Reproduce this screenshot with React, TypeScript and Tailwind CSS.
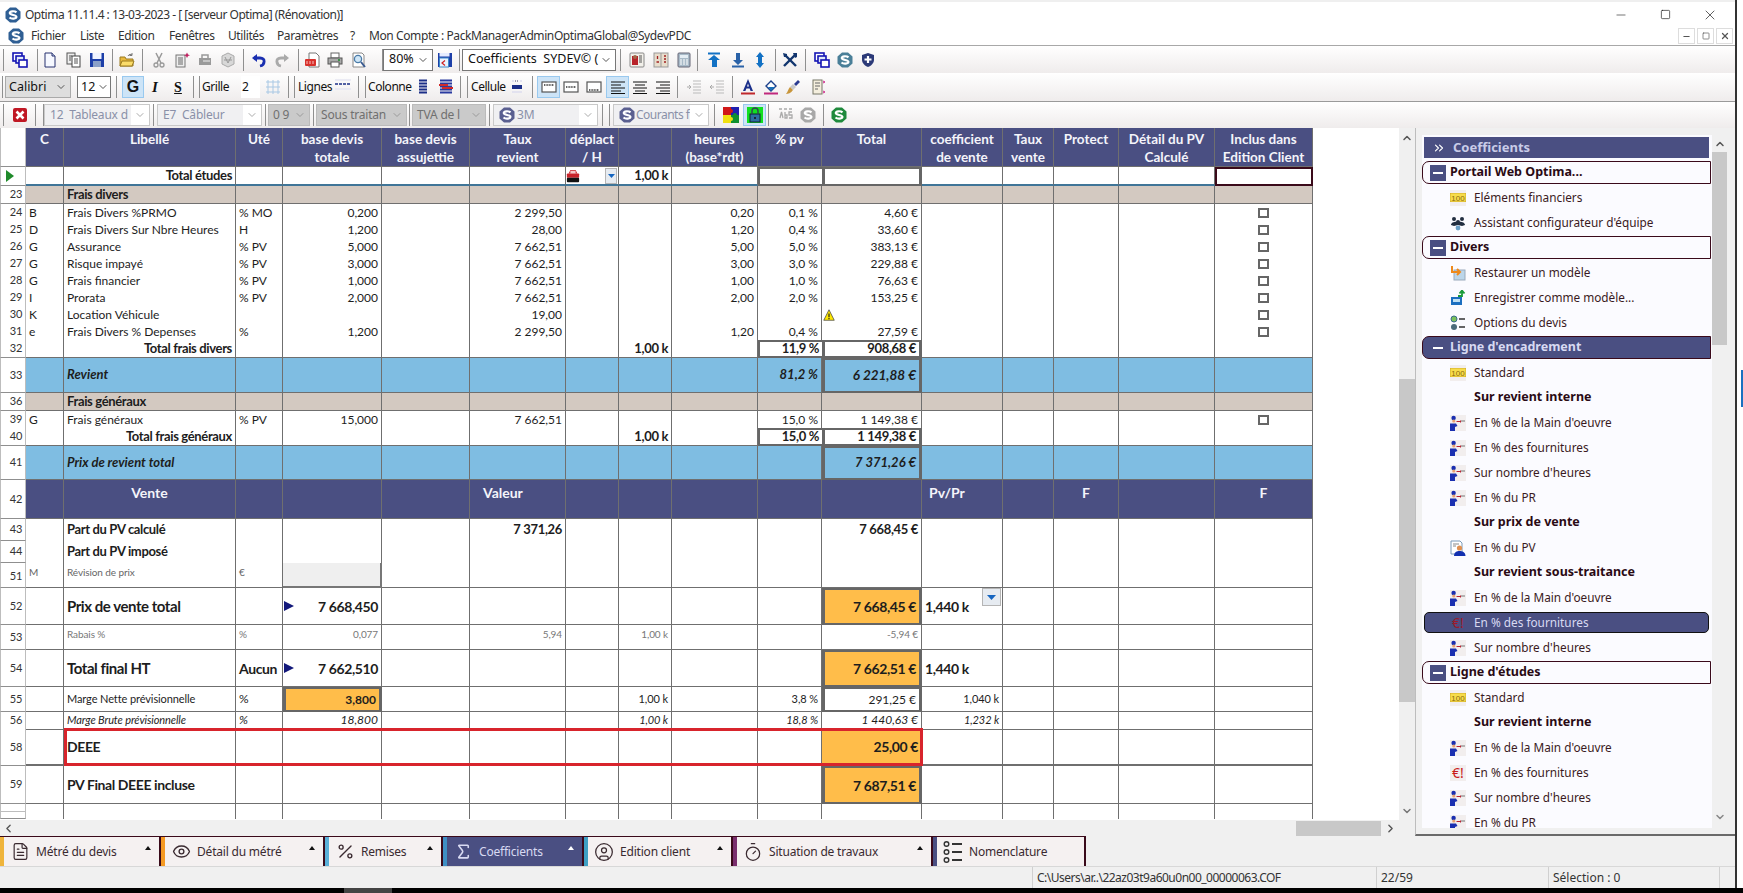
import React, { ReactNode } from "react";
import { FileText, Eye, Percent, Sigma, CircleUser, Timer, ChevronDown, ChevronUp, ChevronLeft, ChevronRight, ChevronsRight, X, Minus, Square } from "lucide-react";

/* ---------- small drawings ---------- */
const I = ({ children, w = 16, h = 16 }: { children: ReactNode; w?: number; h?: number }) => (
  <svg width={w} height={h} viewBox="0 0 16 16" className="shrink-0">{children}</svg>
);
const SLogo = ({ color = "#3f5f8f", size = 16 }: { color?: string; size?: number }) => (
  <I w={size} h={size}>
    <path d="M5 0.5h6l4.5 4v7L11 15.5H5L0.5 11.5v-7z" fill={color} />
    <path d="M11.5 5.4C9.5 3.6 4.8 4 4.8 6.1c0 2.3 6.6 1.5 6.6 3.7 0 2.1-4.8 2.5-6.9.7" stroke="#fff" strokeWidth="2.2" fill="none" />
  </I>
);
const Cascade = () => (
  <I>
    <rect x="1" y="1" width="9" height="8" fill="#fff" stroke="#1414b4" strokeWidth="1.6" />
    <rect x="4" y="4" width="8" height="7" fill="#dfe8f8" stroke="#1414b4" strokeWidth="1.6" />
    <rect x="7" y="8" width="8" height="7" fill="#fff" stroke="#1414b4" strokeWidth="1.6" />
  </I>
);
const NewDoc = () => (
  <I>
    <path d="M3 1h7l3 3v11H3z" fill="#f6f8ff" stroke="#27306e" />
    <path d="M10 1v3h3" fill="#c6cfe8" stroke="#27306e" />
  </I>
);
const CopyDoc = () => (
  <I>
    <rect x="1" y="1" width="8" height="11" fill="#eee" stroke="#555" />
    <rect x="6" y="4" width="8" height="11" fill="#fff" stroke="#444" />
    <path d="M8 7h4M8 9h4M8 11h4M3 4h3M3 6h2M3 8h2" stroke="#555" />
  </I>
);
const Floppy = () => (
  <I>
    <path d="M1 1h14v14H1z" fill="#1d3fa8" />
    <rect x="3.5" y="1" width="9" height="6" fill="#f0f4ff" />
    <rect x="4" y="9" width="8" height="6" fill="#8aa0c8" />
  </I>
);
const FloppyK = () => (
  <I>
    <path d="M1 1h14v14H1z" fill="#1d3fa8" />
    <rect x="2.5" y="1" width="10" height="3.5" fill="#e6ecff" />
    <rect x="2.5" y="6" width="9" height="9" fill="#e9f3ff" stroke="#3d88c8" />
    <path d="M8 8.5l-3 2.5 3 2.5" stroke="#d02020" strokeWidth="1.2" fill="none" />
  </I>
);
const Folder = () => (
  <I>
    <path d="M1 5h5l1 2h7v7H1z" fill="#e9b93d" stroke="#9a7a20" />
    <path d="M3 9h12l-2 5H1z" fill="#fbdc6a" stroke="#9a7a20" />
    <path d="M9 4c1-2 3-2 4-1M13 1v2.5h-2.5" stroke="#777" fill="none" />
  </I>
);
const Scissors = () => (
  <I>
    <path d="M5 1l5 10M11 1L6 11" stroke="#999" strokeWidth="1.5" />
    <circle cx="5" cy="13" r="2" fill="none" stroke="#999" strokeWidth="1.3" />
    <circle cx="11" cy="13" r="2" fill="none" stroke="#999" strokeWidth="1.3" />
  </I>
);
const PasteStar = () => (
  <I>
    <rect x="2" y="3" width="9" height="12" fill="#eee" stroke="#777" />
    <path d="M4 6h5M4 8h5M4 10h5M4 12h5" stroke="#666" />
    <path d="M13 0.5l1 2 2 .8-2 .8-1 2-1-2-2-.8 2-.8z" fill="#c02060" />
  </I>
);
const ToolBox = () => (
  <I>
    <path d="M2 6h12v7H2z" fill="#9a9a9a" />
    <path d="M5 6V3h6v3" fill="none" stroke="#999" strokeWidth="1.5" />
    <path d="M6 9h7" stroke="#eee" />
  </I>
);
const Recycle = () => (
  <I>
    <path d="M8 1l6 3v8l-6 3-6-3V4z" fill="#d8d8d8" stroke="#aaa" />
    <path d="M5 5l3 6 3-6M4 8h8" stroke="#999" fill="none" />
  </I>
);
const Undo = ({ gray = false }: { gray?: boolean }) => (
  <I>
    <path d="M3 6h6c6 0 5 7 0 8" stroke={gray ? "#aaa" : "#1a2fb0"} strokeWidth="2.8" fill="none" />
    <path d="M1 6l5-4v8z" fill={gray ? "#aaa" : "#1a2fb0"} />
  </I>
);
const Pdf = () => (
  <I>
    <path d="M5 1h7l3 3v11H5z" fill="#fff" stroke="#777" />
    <rect x="1" y="7" width="11" height="7" rx="1" fill="#d8312c" />
    <path d="M3 9v3M6 9v3M9 9v3" stroke="#f7c3c0" />
  </I>
);
const Printer = () => (
  <I>
    <rect x="4" y="1" width="8" height="5" fill="#fff" stroke="#666" />
    <rect x="1" y="6" width="14" height="6" fill="#aaa" stroke="#555" />
    <rect x="4" y="10" width="8" height="5" fill="#fff" stroke="#555" />
    <path d="M11 8h2" stroke="#1a8a2a" strokeWidth="1.4" />
  </I>
);
const Preview = () => (
  <I>
    <path d="M2 1h9l2 2v12H2z" fill="#fff" stroke="#888" />
    <circle cx="7" cy="7" r="3.6" fill="#cfe6f7" stroke="#4a7ba8" strokeWidth="1.3" />
    <path d="M10 10l4 5" stroke="#3a5a90" strokeWidth="2" />
  </I>
);
const Book1 = () => (
  <I>
    <rect x="1" y="1" width="14" height="14" rx="1" fill="#f2f0ea" stroke="#888" />
    <rect x="3" y="4" width="6" height="9" fill="#b8232a" />
    <circle cx="6" cy="5" r="2" fill="#a06a4a" />
    <path d="M10 4h3M10 6h3M10 8h3M10 10h3" stroke="#555" />
  </I>
);
const Book2 = () => (
  <I>
    <rect x="1" y="1" width="14" height="14" fill="#e8ddcc" stroke="#999" />
    <path d="M8 1v14" stroke="#999" />
    <path d="M4.5 4v3M3.5 10h2.5M11 4h2M11 7h2M11 10h2" stroke="#a02020" strokeWidth="1.3" />
  </I>
);
const Calc = () => (
  <I>
    <rect x="2" y="1" width="12" height="14" rx="1" fill="#a8bac8" stroke="#667" />
    <rect x="4" y="3" width="8" height="3" fill="#e4edf4" />
    <path d="M4 8h2M7 8h2M10 8h2M4 10h2M7 10h2M10 10h2M4 12h2M7 12h2M10 12h2" stroke="#fff" />
  </I>
);
const Arrow = ({ kind }: { kind: "up" | "down" | "both" }) => (
  <I>
    {kind === "up" && <path d="M2 1.5h12" stroke="#1271c4" strokeWidth="2" />}
    {kind === "up" && <path d="M8 3l6 5h-3v7H6V8H2z" fill="#1271c4" />}
    {kind === "down" && <path d="M2 14.5h12" stroke="#2a62a8" strokeWidth="2" />}
    {kind === "down" && <path d="M8 13l-5-5h3V1h4v7h3z" fill="#2a62a8" />}
    {kind === "both" && <path d="M8 0l4 5H10v6h2l-4 5-4-5h2V5H4z" fill="#1271c4" />}
  </I>
);
const Tools = () => (
  <I>
    <path d="M2 14L13 3" stroke="#12356e" strokeWidth="2.4" />
    <path d="M14 14L4 4" stroke="#12356e" strokeWidth="2.4" />
    <path d="M1 1l4 1 0 3-3 0z" fill="#12356e" />
    <path d="M11 1l4 0v4l-2 1z" fill="#12356e" />
  </I>
);
const Shield = () => (
  <I>
    <path d="M8 1l6 2v5c0 3-3 6-6 7-3-1-6-4-6-7V3z" fill="#2c3a78" />
    <path d="M8 4v7M4.5 7.5h7" stroke="#fff" strokeWidth="2.2" />
  </I>
);
const GridIc = () => (
  <I>
    <path d="M1 3h14M1 8h14M1 13h14M3 1v14M8 1v14M13 1v14" stroke="#a9c8e4" />
  </I>
);
const LinesIc = () => (
  <I>
    <path d="M0 5h16" stroke="#1c2f88" strokeWidth="1.6" strokeDasharray="3 1" />
    <path d="M0 1h16M0 10h16" stroke="#e6e6f2" strokeWidth="1.4" />
  </I>
);
const ColIc = () => (
  <I>
    <path d="M4 1.5h8M4 4.5h8M4 7.5h8M4 10.5h8M4 13.5h8" stroke="#1c2f88" strokeWidth="2" />
  </I>
);
const ColIc2 = () => (
  <I>
    <path d="M2 1.5h12M2 4.5h12M2 7.5h12M2 10.5h12M2 13.5h12" stroke="#2a3ba0" strokeWidth="1.8" />
    <path d="M1 6h9M4 9h11" stroke="#d02a2a" strokeWidth="2" />
  </I>
);
const CellIc = () => (
  <I>
    <rect x="3" y="6" width="10" height="4" fill="#1c2f88" />
    <path d="M3 2h2M11 2h2M3 13h10" stroke="#dde" strokeWidth="1.4" />
    <path d="M6 2h4" stroke="#446" strokeWidth="1" strokeDasharray="1 1" />
  </I>
);
const CellAlign = ({ pos }: { pos: number }) => (
  <I>
    <rect x="1" y="3" width="14" height="10" fill="#fff" stroke="#555" strokeWidth="1.2" />
    <path d={`M3 ${pos}h10`} stroke="#333" strokeWidth="1.4" strokeDasharray="1 .6" />
  </I>
);
const AlignIc = ({ d }: { d: string }) => (
  <I>
    <path d={d} stroke="#111" strokeWidth="1" fill="none" />
  </I>
);
const Indent = ({ flip = false }: { flip?: boolean }) => (
  <I>
    <path d="M7 2h8M7 5h8M7 8h8M7 11h8M7 14h8" stroke="#bbb" />
    <path d={flip ? "M1 8h4M3 6L1 8l2 2" : "M1 8h4M3 6l2 2-2 2"} stroke="#aaa" fill="none" />
  </I>
);
const FontA = () => (
  <I>
    <path d="M8 0L3 12h2.4l1-2.6h3.2l1 2.6H13zM7 7.5L8 4.5 9 7.5z" fill="#1a2f8a" fillRule="evenodd" />
    <path d="M1 14.5h14" stroke="#c0282c" strokeWidth="2" />
  </I>
);
const FillBucket = () => (
  <I>
    <path d="M3 7l5-5 5 5-5 5z" fill="#fff" stroke="#1a3f8a" strokeWidth="1.4" />
    <path d="M5 8h7l-4 4z" fill="#1a6fb8" />
    <path d="M1 14.5h14" stroke="#c0287c" strokeWidth="2" />
  </I>
);
const Brush = () => (
  <I>
    <path d="M9 5l4-4 2 2-4 4z" fill="#2a3a90" />
    <path d="M8 5l3 3-3 3-3-3z" fill="#c8c8c8" />
    <path d="M5 8l3 3c-2 3-5 4-7 4 2-2 2-5 4-7z" fill="#c8953a" />
  </I>
);
const Clip = () => (
  <I>
    <rect x="3" y="1" width="9" height="14" fill="#f4eedd" stroke="#776" />
    <path d="M5 4h5M5 7h5M5 10h3" stroke="#666" />
    <path d="M13 2l2 1-2 1M13 12l2 1-2 1" stroke="#d02a8a" fill="none" />
  </I>
);
const RedX = () => (
  <I>
    <rect x="1" y="1" width="14" height="14" rx="2" fill="#c01824" />
    <path d="M4.5 4.5l7 7M11.5 4.5l-7 7" stroke="#fff" strokeWidth="2.6" />
  </I>
);
const Puzzle = () => (
  <I>
    <rect x="0" y="0" width="8" height="8" fill="#d01818" />
    <rect x="8" y="0" width="8" height="8" fill="#2020b0" />
    <rect x="0" y="8" width="8" height="8" fill="#f0e010" />
    <rect x="8" y="8" width="8" height="8" fill="#109030" />
    <circle cx="8" cy="4" r="2" fill="#d01818" />
    <circle cx="8" cy="12" r="2" fill="#f0e010" />
    <circle cx="12" cy="8" r="2" fill="#109030" />
  </I>
);
const Lock = () => (
  <I>
    <rect x="0" y="0" width="16" height="16" fill="#10e020" />
    <rect x="3" y="7" width="10" height="8" fill="#2c6ea0" stroke="#123" />
    <path d="M5 7V4a3 3 0 016 0v3" fill="none" stroke="#345" strokeWidth="1.4" />
    <circle cx="8" cy="11" r="1" fill="#111" />
  </I>
);
const Abs = () => (
  <I>
    <path d="M1 2h3M6 2h3M11 2h3" stroke="#aaa" strokeWidth="1.6" />
    <path d="M2 11l1.5-6 1.5 6M7 5v6h2V8H7M14 5h-3v3h3v3h-3" stroke="#aaa" strokeWidth="1.3" fill="none" />
  </I>
);
const Hundred = () => (
  <span className="flex h-[16px] w-[16px] shrink-0 items-center bg-[#f2eeee]">
    <svg width="16" height="9" viewBox="0 0 16 9">
      <rect width="16" height="9" fill="#f7dc4a" stroke="#c9a020" strokeWidth="0.8" />
      <text x="8" y="7.5" fontSize="8" textAnchor="middle" fill="#8a6a10" fontFamily="Liberation Sans, sans-serif">100</text>
    </svg>
  </span>
);
const Team = () => (
  <I>
    <circle cx="4" cy="4" r="2" fill="#222e40" />
    <circle cx="12" cy="4" r="2" fill="#222e40" />
    <circle cx="8" cy="7" r="2" fill="#222e40" />
    <path d="M1 10c0-3 5-4 7-3 2-1 7 0 7 3l-3 1-4-1-4 1z" fill="#222e40" />
    <circle cx="8" cy="13" r="2.4" fill="#6aa0c8" />
  </I>
);
const Restore = () => (
  <I>
    <rect x="4" y="5" width="11" height="10" fill="#bcd6ea" stroke="#9ab" />
    <path d="M2 1v6h8M7 4l3 3-3 3" stroke="#ee8a1c" strokeWidth="2" fill="none" />
  </I>
);
const SaveModel = () => (
  <I>
    <rect x="1" y="7" width="11" height="8" fill="#1c6fc0" />
    <rect x="3" y="9" width="7" height="3" fill="#bfe0f4" />
    <path d="M8 6h4V1M9.5 3.5L12 0.5l2.5 3" stroke="#1a9a3a" strokeWidth="1.8" fill="none" />
  </I>
);
const OptionsIc = () => (
  <I>
    <circle cx="4" cy="4" r="3" fill="#7ac05a" stroke="#3a6a8a" />
    <circle cx="4" cy="12" r="3" fill="#4a6a7a" />
    <path d="M9 4h6M9 12h6" stroke="#333" strokeWidth="1.4" />
  </I>
);
const Worker = () => (
  <I>
    <rect x="0" y="0" width="16" height="16" fill="#f2eeee" />
    <circle cx="3.6" cy="3" r="2.2" fill="#1a2fb0" />
    <circle cx="3.8" cy="6" r="1.6" fill="#e8a070" />
    <path d="M0 16V8.5h6L7.5 11 5 12v4z" fill="#1a2fb0" />
    <path d="M6 6h4l1-1v3l-1-1H7z" fill="#b82030" />
    <path d="M11 6h4" stroke="#777" />
  </I>
);
const PvPerson = () => (
  <I>
    <path d="M1 1h9l2 2v11H1z" fill="#fff" stroke="#7a9ab8" />
    <path d="M3 4h6M3 6h3" stroke="#888" />
    <circle cx="9.5" cy="8" r="2.6" fill="#e09050" />
    <path d="M4 16c0-4 3-5 5.5-5s6 1 6 5z" fill="#1230b0" />
  </I>
);
const EuroBang = ({ dim = false }: { dim?: boolean }) => (
  <span className={`flex h-[16px] w-[16px] shrink-0 items-center justify-center text-[14px] leading-none ${dim ? "text-[#9a1a2a]" : "text-[#c91a1a] bg-[#f2eeee]"}`}>€!</span>
);
const Warn = () => (
  <svg width="12" height="12" viewBox="0 0 16 16" className="shrink-0">
    <path d="M8 1l7 14H1z" fill="#ffe800" stroke="#444" strokeWidth="1" />
    <path d="M8 6v5" stroke="#222" strokeWidth="1.6" />
    <path d="M8 12v1.5" stroke="#222" strokeWidth="1.6" />
  </svg>
);
const Car = () => (
  <I w={14} h={14}>
    <path d="M3 5l2-4h6l2 4z" fill="#c8242a" />
    <rect x="1" y="5" width="14" height="5" rx="1" fill="#c8242a" />
    <rect x="5" y="2" width="6" height="3" fill="#f4c8c8" />
    <rect x="1" y="10" width="14" height="5" rx="1" fill="#111" />
  </I>
);
const Nomen = () => (
  <svg width="20" height="24" viewBox="0 0 20 24" className="shrink-0" fill="none" stroke="#333" strokeWidth="1.4">
    <circle cx="3.5" cy="4" r="2.3" />
    <circle cx="3.5" cy="12" r="2.3" />
    <circle cx="3.5" cy="20" r="2.3" />
    <path d="M9 4h10M9 12h10M9 20h10" strokeWidth="1.8" />
  </svg>
);
const Tri = ({ c = "#111" }: { c?: string }) => (
  <svg width="6" height="4" viewBox="0 0 6 4" className="shrink-0"><path d="M3 0l3 4H0z" fill={c} /></svg>
);

/* ---------- toolbar parts ---------- */
const Sep = ({ w }: { w: string }) => (
  <div className={`flex h-[22px] shrink-0 justify-center ${w}`}><div className="h-full w-px bg-[#8f8f8f]" /></div>
);
const Gap = ({ w }: { w: string }) => <div className={`shrink-0 ${w}`} />;
const B = ({ w, children, on }: { w: string; children: ReactNode; on?: boolean }) => (
  <div className={`flex shrink-0 items-center justify-center ${w} ${on ? "h-[22px] border border-[#99c9ef] bg-[#cde4f7]" : "h-[22px]"}`}>{children}</div>
);
const T = ({ w, children, c = "" }: { w: string; children: ReactNode; c?: string }) => (
  <div className={`flex h-[22px] shrink-0 items-center whitespace-nowrap text-[12px] tracking-[-0.45px] text-[#111] ${w} ${c}`}>{children}</div>
);
const Combo = ({ w, t, k = "white" }: { w: string; t: ReactNode; k?: "white" | "dis" | "gray" }) => {
  if (k === "white")
    return (
      <div className={`flex h-[22px] shrink-0 items-center justify-between overflow-hidden border border-[#777] bg-white pl-[5px] pr-[3px] text-[12.5px] text-[#111] ${w}`}>
        <span className="whitespace-pre">{t}</span>
        <ChevronDown size={12} className="shrink-0 text-[#555]" />
      </div>
    );
  if (k === "gray")
    return (
      <div className={`flex h-[22px] shrink-0 items-center justify-between overflow-hidden border border-[#bbb] bg-[#cacaca] pl-[4px] pr-[3px] text-[12px] tracking-[-0.2px] text-[#707070] ${w}`}>
        <span className="whitespace-pre">{t}</span>
        <ChevronDown size={12} className="shrink-0 text-[#9a9a9a]" />
      </div>
    );
  return (
    <div className={`flex h-[22px] shrink-0 items-center overflow-hidden border border-[#c9c9c9] bg-[#f0f0f2] pl-[5px] text-[12px] tracking-[-0.2px] text-[#8a90a8] ${w}`}>
      <span className="flex-1 whitespace-pre">{t}</span>
      <div className="flex h-full w-[18px] shrink-0 items-center justify-center bg-white"><ChevronDown size={12} className="text-[#aaa]" /></div>
    </div>
  );
};

const AL = "M1 3h14M1 6h10M1 9h14M1 12h10M1 14.5h14";
const AC = "M1 3h14M3 6h10M1 9h14M3 12h10M1 14.5h14";
const AR = "M1 3h14M5 6h10M1 9h14M5 12h10M1 14.5h14";

const Toolbars = () => (
  <div className="shrink-0">
    <div className="flex h-[28px] items-center border-t border-[#a8a8a8] bg-linear-to-b from-white to-[#efecec]">
      <Sep w="w-[7px]" /><B w="w-[26px]"><Cascade /></B><Sep w="w-[8px]" />
      <B w="w-[18px]"><NewDoc /></B><B w="w-[30px]"><CopyDoc /></B><B w="w-[16px]"><Floppy /></B>
      <Sep w="w-[14px]" /><B w="w-[16px]"><Folder /></B><Sep w="w-[14px]" />
      <B w="w-[20px]"><Scissors /></B><B w="w-[26px]"><PasteStar /></B><B w="w-[20px]"><ToolBox /></B><B w="w-[26px]"><Recycle /></B>
      <Sep w="w-[4px]" /><B w="w-[28px]"><Undo /></B><B w="w-[18px]"><span className="-scale-x-100"><Undo gray /></span></B>
      <Sep w="w-[14px]" /><B w="w-[14px]"><Pdf /></B><B w="w-[32px]"><Printer /></B><B w="w-[16px]"><Preview /></B>
      <Gap w="w-[14px]" /><Sep w="w-[2px]" />
      <Combo w="w-[50px]" t="80%" /><B w="w-[24px]"><FloppyK /></B><Sep w="w-[5px]" />
      <Combo w="w-[154px]" t="Coefficients  SYDEV© (" /><Sep w="w-[8px]" />
      <B w="w-[26px]"><Book1 /></B><B w="w-[22px]"><Book2 /></B><B w="w-[24px]"><Calc /></B><Sep w="w-[2px]" />
      <B w="w-[32px]"><Arrow kind="up" /></B><B w="w-[16px]"><Arrow kind="down" /></B><B w="w-[28px]"><Arrow kind="both" /></B><Sep w="w-[2px]" />
      <B w="w-[28px]"><Tools /></B><Sep w="w-[2px]" /><B w="w-[32px]"><Cascade /></B><B w="w-[14px]"><SLogo color="#4a7f98" /></B><B w="w-[32px]"><Shield /></B>
    </div>
    <div className="flex h-[29px] items-center border-b border-[#9a9a9a] bg-linear-to-b from-white to-[#efecec]">
      <Sep w="w-[5px]" />
      <div className="flex h-[22px] w-[66px] shrink-0 items-center justify-between border border-[#aaa] bg-[#dedede] pl-[3px] pr-[3px] text-[12.5px] text-[#111]">Calibri<ChevronDown size={12} className="text-[#555]" /></div>
      <Gap w="w-[6px]" /><Combo w="w-[34px] !pl-[3px] !pr-[1px]" t="12" /><Sep w="w-[11px]" />
      <B w="w-[22px]" on><span className="font-['Liberation_Sans'] text-[16px] font-black text-[#111]">G</span></B>
      <B w="w-[22px]"><span className="font-['Liberation_Serif'] text-[15px] font-bold italic text-[#111]">I</span></B>
      <B w="w-[24px]"><span className="font-['Liberation_Serif'] text-[14px] font-bold text-[#111] underline">S</span></B>
      <Sep w="w-[6px]" /><Sep w="w-[6px]" />
      <T w="w-[39px]">Grille</T>
      <T w="w-[19px]" c="bg-white pl-[1px]">2</T>
      <B w="w-[26px]"><GridIc /></B><Sep w="w-[4px]" /><Sep w="w-[8px]" />
      <T w="w-[33px]">Lignes</T><B w="w-[23px]"><LinesIc /></B><Sep w="w-[8px]" /><Sep w="w-[6px]" />
      <T w="w-[42px]">Colonne</T><B w="w-[26px]"><ColIc /></B><B w="w-[20px]"><ColIc2 /></B><Sep w="w-[8px]" /><Sep w="w-[7px]" />
      <T w="w-[32px]">Cellule</T><B w="w-[28px]"><CellIc /></B><Sep w="w-[2px]" /><Gap w="w-[4px]" />
      <B w="w-[23px]" on><CellAlign pos={6} /></B><B w="w-[22px]"><CellAlign pos={8} /></B><B w="w-[24px]"><CellAlign pos={11} /></B>
      <B w="w-[23px]" on><AlignIc d={AL} /></B><B w="w-[22px]"><AlignIc d={AC} /></B><B w="w-[24px]"><AlignIc d={AR} /></B>
      <Sep w="w-[4px]" /><B w="w-[30px]"><Indent /></B><B w="w-[16px]"><Indent flip /></B><Sep w="w-[14px]" />
      <B w="w-[18px]"><FontA /></B><B w="w-[28px]"><FillBucket /></B><B w="w-[16px]"><Brush /></B><B w="w-[34px]"><Clip /></B>
    </div>
    <div className="flex h-[26px] items-center bg-linear-to-b from-white to-[#efecec]">
      <Sep w="w-[7px]" /><B w="w-[26px]"><RedX /></B><Sep w="w-[4px]" /><Gap w="w-[5px]" /><Sep w="w-[2px]" />
      <Combo w="w-[106px]" k="dis" t="12  Tableaux d" /><Sep w="w-[7px]" />
      <Combo w="w-[105px]" k="dis" t="E7  Câbleur" /><Sep w="w-[6px]" />
      <Combo w="w-[42px]" k="gray" t="0 9" /><Sep w="w-[6px]" />
      <Combo w="w-[91px]" k="gray" t="Sous traitan" /><Sep w="w-[5px]" />
      <Combo w="w-[74px]" k="gray" t="TVA de l" /><Sep w="w-[7px]" />
      <Combo w="w-[105px]" k="dis" t={<span className="flex items-center gap-[2px]"><SLogo color="#5a5f90" />3M</span>} /><Sep w="w-[8px]" /><Sep w="w-[7px]" />
      <Combo w="w-[96px]" k="dis" t={<span className="flex items-center gap-[1px] tracking-[-0.5px]"><SLogo color="#5a5f90" />Courants f</span>} /><Sep w="w-[10px]" />
      <B w="w-[24px]"><Puzzle /></B><B w="w-[23px]" on><Lock /></B><Sep w="w-[4px]" />
      <B w="w-[32px]"><Abs /></B><B w="w-[12px]"><SLogo color="#a8a8a8" /></B><Sep w="w-[18px]" /><B w="w-[14px]"><SLogo color="#1f8a3c" /></B>
    </div>
  </div>
);

/* ---------- grid ---------- */
const COLS = "grid grid-cols-[26px_38px_172px_47px_99px_88px_96px_53px_53px_86px_64px_100px_81px_51px_65px_96px_98px]";
type CellV = string | { t?: ReactNode; c?: string; box?: "pv" | "tot" | "dark" };
const LEFT = [0, 1, 2];

function Row({ n, h, bg = "", txt = "", cells = {}, line = "border-b border-[#6f6f6f]", headNode, headAlign = "items-center" }: {
  n?: ReactNode; h: string; bg?: string; txt?: string; cells?: Record<number, CellV>; line?: string; headNode?: ReactNode; headAlign?: string;
}) {
  return (
    <div className={`${COLS} ${h}`}>
      <div className={`flex justify-end border-x border-b border-x-[#bdbdbd] border-b-[#8f8f8f] bg-white pr-[3px] text-[11px] tracking-[-0.3px] text-[#333] ${headAlign}`}>
        {headNode ?? n}
      </div>
      {Array.from({ length: 16 }).map((_, i) => {
        const v = cells[i];
        const o = typeof v === "string" ? { t: v } : v ?? {};
        const just = LEFT.includes(i) ? "justify-start" : "justify-end";
        const frame =
          o.box === "pv" ? "border-y-2 border-l-2 border-r-0 border-[#666]"
          : o.box === "tot" ? "border-y-2 border-x-[3px] border-[#666]"
          : o.box === "dark" ? "border-2 border-[#3a0a1a]"
          : `border-r border-r-[#6f6f6f] ${line}`;
        return (
          <div key={i} className={`flex min-w-0 items-center overflow-hidden whitespace-nowrap px-[3px] ${frame} ${just} ${bg} ${txt} ${o.c ?? ""}`}>
            {o.t}
          </div>
        );
      })}
    </div>
  );
}
const Check = () => <div className="h-[10px] w-[11px] border-2 border-[#666] bg-white" />;
const chk = { t: <Check />, c: "!justify-center" };
const BOLD = "font-bold text-[13px] tracking-[-0.35px]";
const lblR = "!justify-end font-bold text-[13px] tracking-[-0.35px]";
const line0 = "";
const DD = () => (
  <div className="flex h-[16px] w-[12px] shrink-0 items-center justify-center border border-[#b5b5b5] bg-[#e6ebf1]">
    <svg width="7" height="4" viewBox="0 0 7 4"><path d="M0 0h7L3.5 4z" fill="#1565c0" /></svg>
  </div>
);
const NavTri = () => (
  <svg width="10" height="10" viewBox="0 0 10 10" className="shrink-0"><path d="M0 0l10 5L0 10z" fill="#12187a" /></svg>
);

const head = (a: string, b?: string): CellV => ({
  t: <span className="block w-full text-center">{a}{b && <><br />{b}</>}</span>, c: "!items-start !justify-center !px-0",
});
const orange = "!bg-[#ffbd4a]";
const big = "text-[15px] font-bold tracking-[-0.45px]";
const mid = "text-[14px] font-bold tracking-[-0.4px]";
const small = "text-[11px] tracking-[-0.1px]";

const Rows = () => (
  <div className="relative flex h-[692px] flex-col overflow-hidden bg-white text-[12px] text-[#1d1d1d]">
    <Row h="h-[39px]" bg="bg-[#4a4f82]" txt="font-bold text-[13.5px] leading-[18px] text-[#f4f4fa] pt-[2px]"
      cells={{ 0: head("C"), 1: head("Libellé"), 2: head("Uté"), 3: head("base devis", "totale"), 4: head("base devis", "assujettie"), 5: head("Taux", "revient"), 6: head("déplact", "/ H"), 7: head(""), 8: head("heures", "(base*rdt)"), 9: head("% pv"), 10: head("Total"), 11: head("coefficient", "de vente"), 12: head("Taux", "vente"), 13: head("Protect"), 14: head("Détail du PV", "Calculé"), 15: head("Inclus dans", "Edition Client") }}
      headNode={<span />} />
    <Row h="h-[19px]" line="border-b-2 border-b-[#3f7598]"
      headNode={<svg width="8" height="12" viewBox="0 0 8 12" className="mr-[8px]"><path d="M0 0l8 6-8 6z" fill="#1f8a2a" /></svg>}
      cells={{ 1: { t: "Total études", c: lblR }, 6: { t: <div className="flex w-full items-center justify-between"><Car /><DD /></div>, c: "!pl-0 !pr-[1px]" }, 7: { t: "1,00 k", c: BOLD }, 9: { box: "pv" }, 10: { box: "tot" }, 15: { box: "dark" } }} />
    <Row n="23" h="h-[18px]" bg="bg-[#d3c9c1]" cells={{ 1: { t: "Frais divers", c: BOLD } }} />
    {[
      ["24", "B", "Frais Divers %PRMO", "% MO", "0,200", "2 299,50", "0,20", "0,1 %", "4,60 €"],
      ["25", "D", "Frais Divers Sur Nbre Heures", "H", "1,200", "28,00", "1,20", "0,4 %", "33,60 €"],
      ["26", "G", "Assurance", "% PV", "5,000", "7 662,51", "5,00", "5,0 %", "383,13 €"],
      ["27", "G", "Risque impayé", "% PV", "3,000", "7 662,51", "3,00", "3,0 %", "229,88 €"],
      ["28", "G", "Frais financier", "% PV", "1,000", "7 662,51", "1,00", "1,0 %", "76,63 €"],
      ["29", "I", "Prorata", "% PV", "2,000", "7 662,51", "2,00", "2,0 %", "153,25 €"],
      ["30", "K", "Location Véhicule", "", "", "19,00", "", "", "__warn"],
      ["31", "e", "Frais Divers % Depenses", "%", "1,200", "2 299,50", "1,20", "0,4 %", "27,59 €"],
    ].map((r) => (
      <Row key={r[0]} n={r[0]} h="h-[17px]" line={line0}
        cells={{ 0: r[1], 1: r[2], 2: r[3], 3: r[4], 5: r[5], 8: r[6], 9: r[7], 10: r[8] === "__warn" ? { t: <Warn />, c: "!justify-start !pl-[1px]" } : r[8], 15: chk }} />
    ))}
    <Row n="32" h="h-[18px]" cells={{ 1: { t: "Total frais divers", c: lblR }, 7: { t: "1,00 k", c: BOLD }, 9: { t: "11,9 %", box: "pv", c: BOLD }, 10: { t: "908,68 €", box: "tot", c: BOLD } }} />
    <Row n="33" h="h-[35px]" bg="bg-[#7fbde2]" cells={{ 1: { t: "Revient", c: "font-bold italic text-[13px]" }, 9: { t: "81,2 %", c: "font-bold italic text-[13px]" }, 10: { t: "6 221,88 €", box: "tot", c: "font-bold italic text-[13.5px]" } }} />
    <Row n="36" h="h-[18px]" bg="bg-[#d3c9c1]" cells={{ 1: { t: "Frais généraux", c: BOLD } }} />
    <Row n="39" h="h-[17px]" line={line0} cells={{ 0: "G", 1: "Frais généraux", 2: "% PV", 3: "15,000", 5: "7 662,51", 9: "15,0 %", 10: "1 149,38 €", 15: chk }} />
    <Row n="40" h="h-[18px]" cells={{ 1: { t: "Total frais généraux", c: lblR }, 7: { t: "1,00 k", c: BOLD }, 9: { t: "15,0 %", box: "pv", c: BOLD }, 10: { t: "1 149,38 €", box: "tot", c: BOLD } }} />
    <Row n="41" h="h-[34px]" bg="bg-[#7fbde2]" cells={{ 1: { t: "Prix de revient total", c: "font-bold italic text-[13px]" }, 10: { t: "7 371,26 €", box: "tot", c: "font-bold italic text-[13px]" } }} />
    <Row n="42" h="h-[39px]" bg="bg-[#4a4f82]" txt="font-bold text-[14px] text-[#f4f4fa] !items-start pt-[2px]"
      cells={{ 1: { t: "Vente", c: "!justify-center" }, 5: { t: "Valeur", c: "!justify-start !pl-[13px]" }, 11: { t: "Pv/Pr", c: "!justify-start !pl-[7px]" }, 13: { t: "F", c: "!justify-center" }, 15: { t: "F", c: "!justify-center" } }} />
    <Row n="43" h="h-[22px]" line={line0} cells={{ 1: { t: "Part du PV calculé", c: BOLD }, 5: { t: "7 371,26", c: BOLD }, 10: { t: "7 668,45 €", c: BOLD } }} />
    <Row n="44" h="h-[22px]" line={line0} cells={{ 1: { t: "Part du PV imposé", c: BOLD } }} />
    <Row n="51" h="h-[25px]" txt="!items-start pt-[2px] text-[10px] tracking-[-0.1px] text-[#666]" headAlign="items-end pb-[3px]"
      cells={{ 0: "M", 1: "Révision de prix", 2: "€", 3: { c: "!bg-[#efefef] border-b-2 !border-b-[#777] border-r-2 !border-r-[#777]" } }} />
    <Row n="52" h="h-[37px]" cells={{ 1: { t: "Prix de vente total", c: big }, 3: { t: <div className="flex w-full items-center justify-between"><NavTri /><span className={mid}>7 668,450</span></div>, c: "!pl-[1px]" }, 10: { t: "7 668,45 €", box: "tot", c: `${mid} ${orange}` }, 11: { t: <div className="relative flex h-full w-full items-center"><span className={mid}>1,440 k</span><div className="absolute right-[-2px] top-0 flex h-[18px] w-[19px] items-center justify-center border border-[#b5b5b5] bg-[#e6ebf1]"><svg width="9" height="5" viewBox="0 0 9 5"><path d="M0 0h9L4.5 5z" fill="#1565c0" /></svg></div></div>, c: "!justify-start" } }} />
    <Row n="53" h="h-[25px]" txt="!items-start pt-[2px] text-[10px] tracking-[-0.1px] text-[#777]" cells={{ 1: "Rabais %", 2: "%", 3: "0,077", 5: "5,94", 7: "1,00 k", 10: "-5,94 €" }} />
    <Row n="54" h="h-[37px]" cells={{ 1: { t: "Total final HT", c: big }, 2: { t: "Aucun", c: mid }, 3: { t: <div className="flex w-full items-center justify-between"><NavTri /><span className={mid}>7 662,510</span></div>, c: "!pl-[1px]" }, 10: { t: "7 662,51 €", box: "tot", c: `${mid} ${orange}` }, 11: { t: "1,440 k", c: `${mid} !justify-start` } }} />
    <Row n="55" h="h-[25px]" cells={{ 1: { t: "Marge Nette prévisionnelle", c: small }, 2: "%", 3: { t: "3,800", box: "tot", c: `${orange} font-bold` }, 7: { t: "1,00 k", c: small }, 9: { t: "3,8 %", c: small }, 10: { t: "291,25 €", box: "tot" }, 11: { t: "1,040 k", c: small } }} />
    <Row n="56" h="h-[17px]" txt="italic" cells={{ 1: { t: "Marge Brute prévisionnelle", c: small }, 2: "%", 3: "18,800", 7: { t: "1,00 k", c: small }, 9: { t: "18,8 %", c: small }, 10: "1 440,63 €", 11: { t: "1,232 k", c: small } }} />
    <Row n="58" h="h-[37px]" line="border-b-2 border-b-[#6f6f6f]" cells={{ 1: { t: "DEEE", c: mid }, 10: { t: "25,00 €", c: `${mid} ${orange}` } }} />
    <Row n="59" h="h-[38px]" cells={{ 1: { t: "PV Final DEEE incluse", c: mid }, 10: { t: "7 687,51 €", box: "tot", c: `${mid} ${orange}` } }} />
    <Row h="h-[15px]" line={line0} headNode={<div className="h-[8px] w-full border-b border-[#bdbdbd]" />} headAlign="!items-start !pr-0" />
    {/* the red highlight frame lies over row 58 */}
    <div className="pointer-events-none absolute left-[64px] top-[600px] h-[38px] w-[859px] border-[3px] border-[#d8242c]" />
  </div>
);

/* ---------- side panel ---------- */
const GroupH = ({ t, on }: { t: string; on?: boolean }) => (
  <div className="flex h-[25px] items-center">
    <div className={`flex h-[23px] w-[289px] items-center rounded-l-[7px] border border-[#3a0a1a] pl-[7px] ${on ? "bg-[#4a4f82] text-[#d8daf2]" : "text-[#2a0a14]"} text-[12.5px] font-bold`}>
      <div className={`mr-[4px] flex h-[16px] w-[16px] items-center justify-center ${on ? "" : "bg-[#4a4f82]"}`}><div className="h-[2px] w-[10px] bg-white" /></div>
      {t}
    </div>
  </div>
);
const Item = ({ icon, t, sel }: { icon?: ReactNode; t: string; sel?: boolean }) => (
  <div className="flex h-[25px] items-center">
    <div className={`flex w-[285px] items-center ml-[2px] ${sel ? "h-[21px] rounded-[5px] border border-[#111] bg-[#4a4f82] text-[#d8daf2]" : "h-[21px] text-[#3a1a22]"} text-[11.8px]`}>
      <div className={`flex w-[24px] shrink-0 items-center ${sel ? "ml-[25px]" : "ml-[26px]"}`}>{icon}</div>
      {t}
    </div>
  </div>
);
const Sub = ({ t }: { t: string }) => (
  <div className="flex h-[25px] items-center pl-[52px] text-[12.5px] font-bold text-[#2a0a14]">{t}</div>
);

const Panel = () => (
  <div className="flex h-[708px] w-[320px] shrink-0 flex-col border-b-2 border-l border-b-[#6a6a6a] border-l-[#bdbdbd] bg-[#f0f0f0] pl-[6px] pt-[7px]">
    <div className="flex h-[693px]">
      <div className="h-full w-[290px] shrink-0 overflow-hidden bg-[#fbfbff]">
        <div className="ml-[2px] mt-[2px] mb-[2px] flex h-[21px] w-[285px] items-center bg-[#4a4f82] pl-[8px] text-[13px] font-bold text-[#c9cce8]">
          <ChevronsRight size={14} className="mr-[7px] text-white" />Coefficients
        </div>
        <GroupH t="Portail Web Optima..." />
        <Item icon={<Hundred />} t="Eléments financiers" />
        <Item icon={<Team />} t="Assistant configurateur d'équipe" />
        <GroupH t="Divers" />
        <Item icon={<Restore />} t="Restaurer un modèle" />
        <Item icon={<SaveModel />} t="Enregistrer comme modèle..." />
        <Item icon={<OptionsIc />} t="Options du devis" />
        <GroupH t="Ligne d'encadrement" on />
        <Item icon={<Hundred />} t="Standard" />
        <Sub t="Sur revient interne" />
        <Item icon={<Worker />} t="En % de la Main d'oeuvre" />
        <Item icon={<Worker />} t="En % des fournitures" />
        <Item icon={<Worker />} t="Sur nombre d'heures" />
        <Item icon={<Worker />} t="En % du PR" />
        <Sub t="Sur prix de vente" />
        <Item icon={<PvPerson />} t="En % du PV" />
        <Sub t="Sur revient sous-traitance" />
        <Item icon={<Worker />} t="En % de la Main d'oeuvre" />
        <Item icon={<EuroBang dim />} t="En % des fournitures" sel />
        <Item icon={<Worker />} t="Sur nombre d'heures" />
        <GroupH t="Ligne d'études" />
        <Item icon={<Hundred />} t="Standard" />
        <Sub t="Sur revient interne" />
        <Item icon={<Worker />} t="En % de la Main d'oeuvre" />
        <Item icon={<EuroBang />} t="En % des fournitures" />
        <Item icon={<Worker />} t="Sur nombre d'heures" />
        <Item icon={<Worker />} t="En % du PR" />
      </div>
      <div className="flex h-full w-[22px] flex-col items-start">
        <div className="flex h-[17px] w-[15px] items-center justify-center"><ChevronUp size={12} strokeWidth={3} className="text-[#555]" /></div>
        <div className="h-[193px] w-[15px] bg-[#c8c8c8]" />
        <div className="flex-1" />
        <div className="flex h-[17px] w-[15px] items-center justify-center pb-[6px]"><ChevronDown size={12} strokeWidth={3} className="text-[#888]" /></div>
      </div>
    </div>
  </div>
);

/* ---------- tabs ---------- */
const Tab = ({ w, accent, icon, t, caret = true, sel }: { w: string; accent: string; icon: ReactNode; t: string; caret?: boolean; sel?: boolean }) => (
  <div className={`flex h-[30px] shrink-0 items-center border-r-2 border-t border-[#3a0a1a] ${w} ${sel ? "bg-[#4a4f82] text-[#d8daf2]" : "bg-[#f5f1f1] text-[#3a2a30]"}`}>
    <div className={`h-full w-[4px] shrink-0 ${accent}`} />
    <div className="flex w-[32px] shrink-0 items-center justify-center">{icon}</div>
    <span className="flex-1 text-[12px] tracking-[-0.2px]">{t}</span>
    {caret && <span className="mr-[8px] mb-[8px]"><Tri c={sel ? "#fff" : "#111"} /></span>}
  </div>
);

export default function App() {
  return (
    <div className="flex h-[893px] w-[1743px] flex-col overflow-hidden bg-white text-[#222] [font-family:'Noto_Sans',sans-serif]">
      <div className="flex h-[888px] shrink-0">
        <div className="flex w-[1735px] shrink-0 flex-col">
          <div className="h-[2px] bg-[#efefef]" />
          <div className="flex h-[25px] items-center justify-between pl-[5px]">
            <div className="flex items-center gap-[4px] text-[12px] tracking-[-0.5px] text-[#333]"><SLogo color="#2f5f94" />Optima 11.11.4 : 13-03-2023 - [ [serveur Optima] (Rénovation)]</div>
            <div className="flex items-center text-[#111]">
              <Minus size={14} strokeWidth={1} className="mr-[30px]" />
              <span className="mr-[30px] flex h-[14px] w-[14px] items-center justify-center"><Square size={11} strokeWidth={1.4} /></span>
              <X size={16} strokeWidth={1} className="mr-[17px]" />
            </div>
          </div>
          <div className="flex h-[18px] items-center pl-[8px] text-[12px] tracking-[-0.4px] text-[#333]">
            <SLogo color="#2f5f94" />
            <div className="ml-[7px] flex items-center">
              <span className="w-[49px]">Fichier</span><span className="w-[38px]">Liste</span><span className="w-[51px]">Edition</span><span className="w-[59px]">Fenêtres</span><span className="w-[49px]">Utilités</span><span className="w-[73px]">Paramètres</span><span className="w-[19px]">?</span><span>Mon Compte : PackManagerAdminOptimaGlobal@SydevPDC</span>
            </div>
            <div className="ml-auto flex gap-[2px] pr-[2px]">
              <div className="flex h-[16px] w-[17px] items-center justify-center border border-[#ddd]"><Minus size={9} strokeWidth={3} className="text-[#555]" /></div>
              <div className="flex h-[16px] w-[17px] items-center justify-center border border-[#ddd]"><Square size={8} strokeWidth={2} className="text-[#555]" /></div>
              <div className="flex h-[16px] w-[17px] items-center justify-center border border-[#ddd]"><X size={10} strokeWidth={3} className="text-[#555]" /></div>
            </div>
          </div>
          <Toolbars />
          <div className="flex h-[708px] shrink-0 [font-family:Lato,sans-serif]">
            <div className="flex w-[1399px] shrink-0 flex-col">
              <Rows />
              <div className="flex h-[16px] items-center justify-between bg-[#f0f0f0]">
                <ChevronLeft size={13} strokeWidth={2.5} className="ml-[2px] text-[#555]" />
                <div className="flex items-center">
                  <div className="h-[15px] w-[85px] bg-[#c8c8c8]" />
                  <ChevronRight size={13} strokeWidth={2.5} className="ml-[3px] mr-[2px] text-[#555]" />
                </div>
              </div>
            </div>
            <div className="flex w-[16px] shrink-0 flex-col items-center bg-[#f0f0f0] pt-[4px]">
              <ChevronUp size={12} strokeWidth={3} className="text-[#555]" />
              <div className="mt-[235px] h-[323px] w-full bg-[#c8c8c8]" />
              <ChevronDown size={12} strokeWidth={3} className="mt-[103px] text-[#777]" />
            </div>
            <div className="[font-family:'Noto_Sans',sans-serif]"><Panel /></div>
          </div>
          <div className="flex h-[30px] shrink-0 bg-[#f0f0f0] [font-family:'Noto_Sans',sans-serif]">
            <Tab w="w-[161px]" accent="bg-[#efb43b]" icon={<FileText size={19} strokeWidth={1.5} />} t="Métré du devis" />
            <Tab w="w-[164px]" accent="bg-[#f59a23]" icon={<Eye size={19} strokeWidth={1.7} />} t="Détail du métré" />
            <Tab w="w-[118px]" accent="bg-[#5ab0d8]" icon={<Percent size={19} strokeWidth={1.7} />} t="Remises" />
            <Tab w="w-[141px]" accent="bg-[#3f8fc4]" icon={<Sigma size={19} strokeWidth={2} />} t="Coefficients" sel />
            <Tab w="w-[149px]" accent="bg-[#3fa0c4]" icon={<CircleUser size={20} strokeWidth={1.5} />} t="Edition client" />
            <Tab w="w-[200px]" accent="bg-[#7a2f6e]" icon={<Timer size={20} strokeWidth={1.5} />} t="Situation de travaux" />
            <Tab w="w-[153px]" accent="bg-[#4a4f82]" icon={<Nomen />} t="Nomenclature" caret={false} />
          </div>
          <div className="flex h-[22px] shrink-0 items-center border-t border-[#d8d8d8] bg-[#f0f0f0] text-[12px] text-[#333]">
            <div className="ml-[1032px] flex h-full w-[344px] items-center border-l border-[#d0d0d0] pl-[4px] tracking-[-0.5px]">C:\Users\ar..\22az03t9a60u0n00_00000063.COF</div>
            <div className="flex h-full w-[172px] items-center border-l border-[#d0d0d0] pl-[4px]">22/59</div>
            <div className="flex h-full w-[172px] items-center border-x border-[#d0d0d0] pl-[4px]">Sélection : 0</div>
          </div>
        </div>
        <div className="w-[2px] shrink-0 bg-[#333]" />
        <div className="flex-1 pt-[370px]"><div className="ml-auto h-[37px] w-[2px] bg-[#1a70c0]" /></div>
      </div>
      <div className="flex h-[5px] shrink-0 bg-black">
        <div className="ml-[344px] h-full w-[48px] bg-[#444]" />
      </div>
    </div>
  );
}
